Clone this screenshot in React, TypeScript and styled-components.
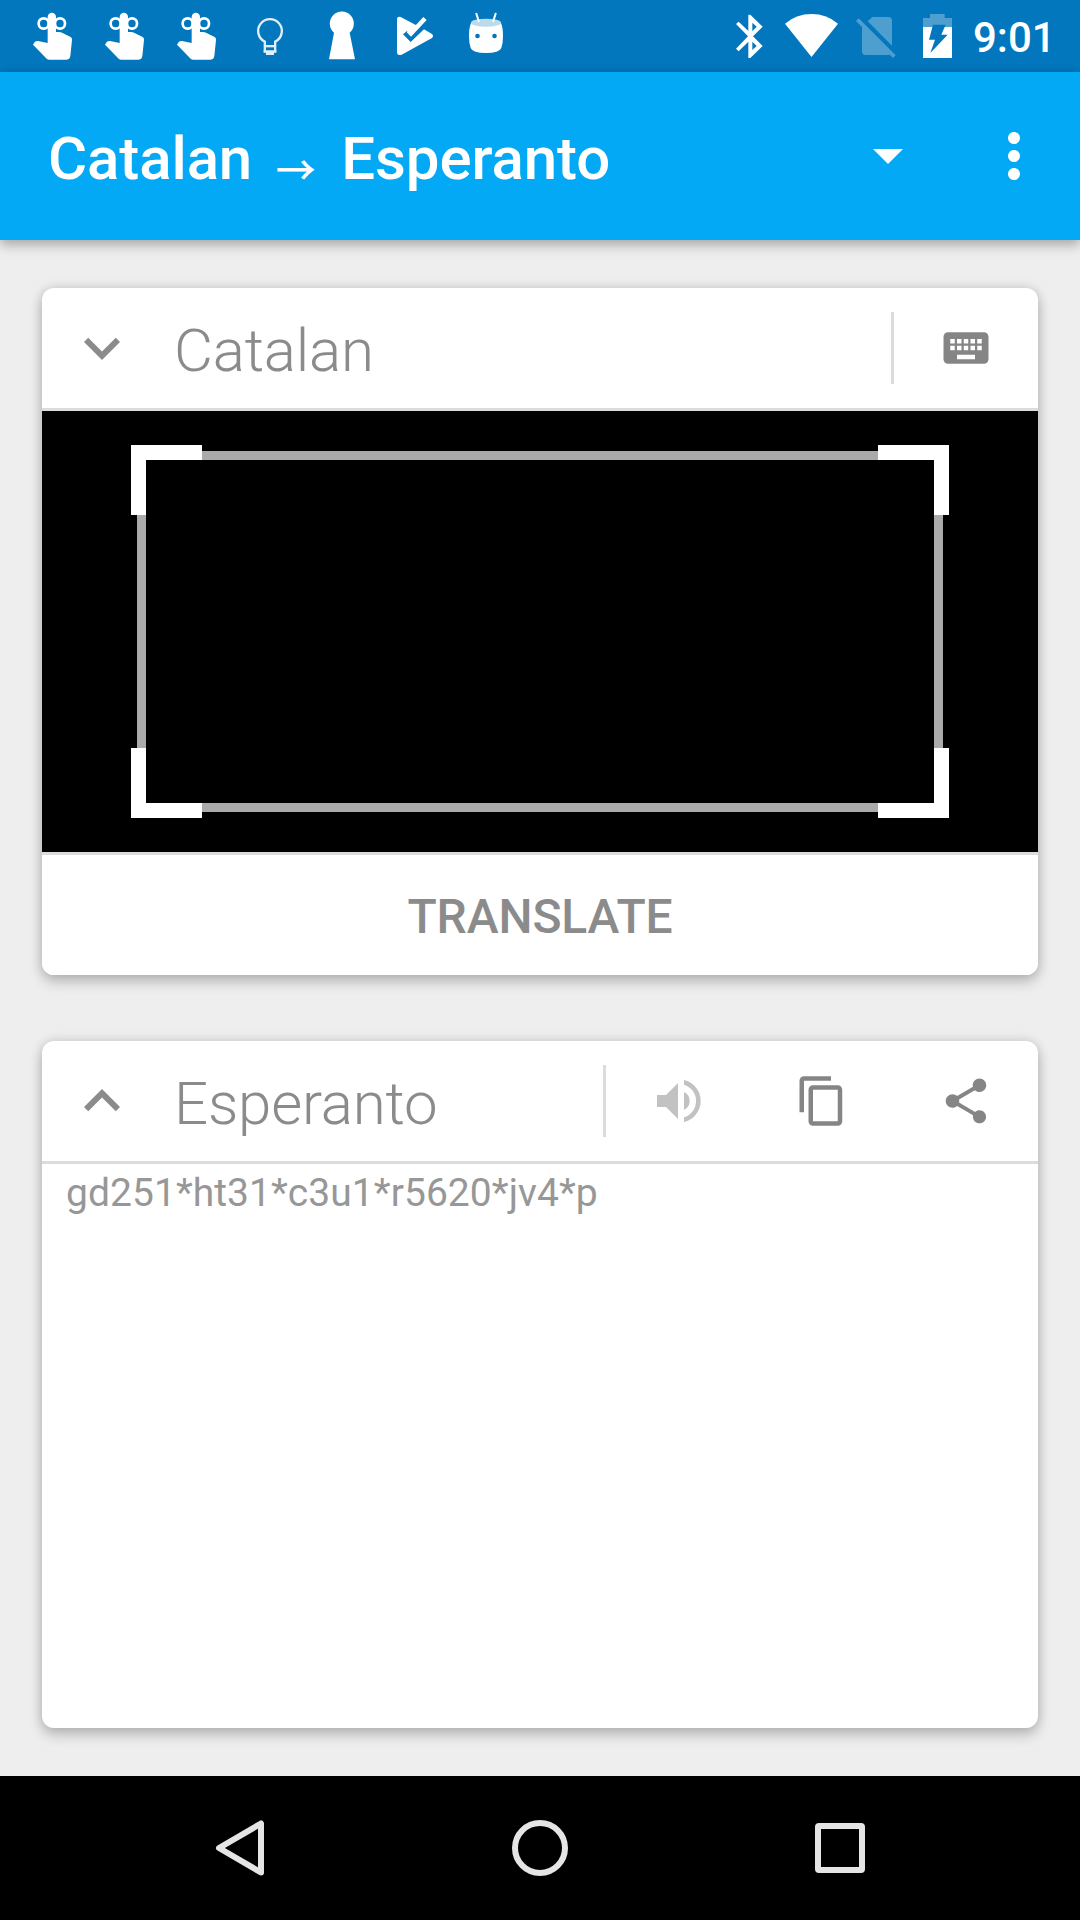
import React from "react";
import styled, { createGlobalStyle } from "styled-components";

const GlobalStyle = createGlobalStyle`
  * { box-sizing: border-box; }
  html, body { margin: 0; padding: 0; }
  body { background: #eee; font-family: Roboto, "Noto Sans", sans-serif; }
  svg { display: block; flex: none; }
`;

const Screen = styled.div`
  width: 1080px;
  height: 1920px;
  display: flex;
  flex-direction: column;
  background: #eee;
  overflow: hidden;
`;

const StatusBar = styled.header`
  height: 72px;
  flex: none;
  display: flex;
  justify-content: space-between;
  background: #0277bd;
  color: #fff;
`;

const Notifications = styled.div`
  display: flex;
  padding-left: 18px;
`;

const SystemIcons = styled.div`
  display: flex;
  padding-right: 29px;
`;

const Clock = styled.time`
  width: 86px;
  padding-left: 8px;
  font-size: 42px;
  font-weight: 500;
  line-height: 75px;
  white-space: nowrap;
`;

const AppBar = styled.div`
  height: 168px;
  flex: none;
  display: flex;
  align-items: center;
  padding: 0 30px 0 48px;
  background: #03a9f4;
  color: #fff;
  box-shadow: 0 6px 12px rgba(0, 0, 0, 0.2), 0 2px 10px rgba(0, 0, 0, 0.14);
`;

const Title = styled.h1`
  flex: 1;
  display: flex;
  align-items: baseline;
  margin: 0;
  padding-top: 6px;
  font-size: 60px;
  font-weight: 500;
  line-height: 70px;
  letter-spacing: -0.1px;
  white-space: nowrap;
`;

const TitleArrow = styled.span`
  width: 89px;
  text-align: center;
  font-family: "Noto Sans CJK JP", sans-serif;
  font-size: 40px;
  font-weight: 500;
  line-height: 40px;
  transform: translate(-1px, 6px);
`;

const BarButton = styled.button<{ $gap?: number }>`
  width: 72px;
  height: 72px;
  margin: 0 0 0 ${(p) => p.$gap ?? 0}px;
  padding: 0;
  border: 0;
  background: none;
  color: inherit;
`;

const Content = styled.main`
  flex: 1;
  display: flex;
  flex-direction: column;
  gap: 66px;
  padding: 48px 42px;
`;

const Card = styled.section`
  height: 687px;
  flex: none;
  display: flex;
  flex-direction: column;
  border-radius: 12px;
  overflow: hidden;
  background: #fff;
  box-shadow: 0 7px 14px rgba(0, 0, 0, 0.2), 0 0 12px rgba(0, 0, 0, 0.14);
`;

const CardHeader = styled.div`
  height: 123px;
  flex: none;
  display: flex;
  align-items: center;
  padding-left: 24px;
  border-bottom: 3px solid #dcdcdc;
  color: #8b8b8b;
`;

const Language = styled.h2`
  flex: 1;
  margin: 0;
  padding: 6px 0 0 36px;
  font-size: 60px;
  font-weight: 300;
  line-height: 70px;
  letter-spacing: -0.22px;
`;

const Actions = styled.div`
  height: 72px;
  display: flex;
  border-left: 3px solid #dcdcdc;
`;

const Action = styled.button<{ $disabled?: boolean }>`
  width: 144px;
  display: flex;
  align-items: center;
  justify-content: center;
  padding: 0;
  border: 0;
  background: none;
  color: ${(p) => (p.$disabled ? "#c2c2c2" : "#858585")};
`;

const Camera = styled.div`
  height: 441px;
  flex: none;
  padding: 34px 89px;
  background: #000;
`;

const TranslateButton = styled.button`
  flex: 1;
  padding: 4px 0 0;
  border: 0;
  border-top: 3px solid #dcdcdc;
  background: #fff;
  color: #8b8b8b;
  font-family: inherit;
  font-size: 48px;
  font-weight: 500;
  line-height: 56px;
  letter-spacing: -0.1px;
`;

const Output = styled.p`
  margin: 0;
  padding: 5px 24px;
  color: #979797;
  font-size: 39px;
  line-height: 48px;
  letter-spacing: 0.05px;
`;

const NavBar = styled.nav`
  height: 144px;
  flex: none;
  display: flex;
  justify-content: center;
  background: #000;
`;

const NavButton = styled.button`
  width: 300px;
  display: flex;
  align-items: center;
  justify-content: center;
  padding: 0;
  border: 0;
  background: none;
`;

const Reminder = () => (
  <svg width="72" height="72" viewBox="54 0 216 216">
    <g fill="none" stroke="#fff" strokeWidth="8">
      <rect x="116" y="55" width="30" height="31" rx="14.5" />
      <rect x="165" y="55" width="30" height="31" rx="14.5" />
    </g>
    <path
      fill="#fff"
      d="M143 51a12 12 0 0 1 25 0V96H178Q182 96 186 98L212 111Q217 114 216 120L211 169Q209 179 200 179H148Q143 179 140 176L99 134L104 126Q108 122 114 123L143 129Z"
    />
  </svg>
);

const Bulb = () => (
  <svg width="72" height="72" viewBox="-18 0 216 216">
    <g fill="none" stroke="#e1eff7" strokeWidth="7">
      <path d="M74.500 157V125A35.500 35.500 0 1 1 105.500 125V157" />
      <path d="M74 138.500H106" />
    </g>
    <path fill="#e1eff7" d="M78 155H102V165H78ZM71 151H109V158H71Z" />
  </svg>
);

const Keyhole = () => (
  <svg width="72" height="72" viewBox="198 0 216 216">
    <path fill="#fff" d="M282 98A36 36 0 1 1 329 98L345 178H267Z" />
  </svg>
);

const PlayCheck = () => (
  <svg width="72" height="72" viewBox="414 0 216 216">
    <path
      fill="#fff"
      d="M471 56Q472 49 482 51L529 76L513 107L501 93L489 103L512 126L552 88L576 102Q582 108 576 114L485 164Q472 168 471 158Z"
    />
    <path fill="#fff" d="M527 76L550 51L560 60L513 110L500 97Z" />
  </svg>
);

const AndroidHead = () => (
  <svg width="72" height="72" viewBox="630 0 216 216">
    <path
      fill="#fff"
      d="M693 69L783 69Q789 83 789 108Q789 130 784 144Q778 159 738 159Q698 159 692 144Q687 130 687 108Q687 83 693 69Z"
    />
    <ellipse cx="738" cy="68" rx="45" ry="12" fill="#bbdaec" />
    <path stroke="#fff" strokeWidth="6" strokeLinecap="round" d="M709 41L716 63M767 41L760 63" />
    <circle cx="712.500" cy="108" r="7" fill="#0277bd" />
    <circle cx="763.500" cy="108" r="7" fill="#0277bd" />
  </svg>
);

const Bluetooth = () => (
  <svg width="45" height="72" viewBox="60 0 135 216">
    <path
      fill="#fff"
      fillRule="evenodd"
      d="M115 44H121L158 80L129 109L158 138L121 174H115V125L86 154L78 146L114 109L78 72L86 65L115 93ZM127 68V94L140 80ZM127 125V150L140 138Z"
    />
  </svg>
);

const Wifi = () => (
  <svg width="72" height="72" viewBox="195 0 216 216">
    <path fill="#fff" d="M304.500 171L225 71Q258 42 304.500 42Q351 42 384 71Z" />
  </svg>
);

const NoSim = () => (
  <svg width="60" height="72" viewBox="411 0 180 216">
    <g fill="#4e9fd0">
      <path d="M487 51H535Q546 51 546 62V137L473 64Z" />
      <path d="M456 78L540 162Q538 165 535 165H467Q456 165 456 154Z" />
      <path d="M446 55L557 166L549 174L438 63Z" />
    </g>
  </svg>
);

const Battery = () => (
  <svg width="58" height="72" viewBox="591 0 174 216">
    <path fill="#4e9fd0" d="M639 54H660V42H704V54H726V82H639Z" />
    <path fill="#fff" d="M639 81H726V174H639Z" />
    <path fill="#0277bd" d="M669 74H707L694 104H713L661 159L675 119H657Z" />
  </svg>
);

const Speaker = () => (
  <svg width="54" height="54" viewBox="213 162 162 162" fill="currentColor">
    <path d="M231 225V261H258L294 297V189L258 225Z" />
    <path d="M312 216A30 30 0 0 1 312 270Z" />
    <path d="M312 180A64.700 64.700 0 0 1 312 306V292A51.300 51.300 0 0 0 312 194Z" />
  </svg>
);

const MaterialIcon = ({ d, size = 54 }: { d: string; size?: number }) => (
  <svg width={size} height={size} viewBox="0 0 24 24" fill="currentColor">
    <path d={d} />
  </svg>
);

const icons = {
  dropDown: "M7 9.700l5 5 5-5z",
  more: "M12 8c1.100 0 2-.9 2-2s-.9-2-2-2-2 .9-2 2 .9 2 2 2zm0 2c-1.100 0-2 .9-2 2s.9 2 2 2 2-.9 2-2-.9-2-2-2zm0 6c-1.100 0-2 .9-2 2s.9 2 2 2 2-.9 2-2-.9-2-2-2z",
  expandMore: "M16.590 8.590L12 13.170 7.410 8.590 6 10l6 6 6-6z",
  expandLess: "M12 8l-6 6 1.410 1.410L12 10.830l4.590 4.580L18 14z",
  keyboard:
    "M20 5H4c-1.100 0-1.990.9-1.990 2L2 17c0 1.100.9 2 2 2h16c1.100 0 2-.9 2-2V7c0-1.100-.9-2-2-2zm-9 3h2v2h-2V8zm0 3h2v2h-2v-2zM8 8h2v2H8V8zm0 3h2v2H8v-2zm-1 2H5v-2h2v2zm0-3H5V8h2v2zm9 7H8v-2h8v2zm0-4h-2v-2h2v2zm0-3h-2V8h2v2zm3 3h-2v-2h2v2zm0-3h-2V8h2v2z",
  copy: "M16 1H4c-1.100 0-2 .9-2 2v14h2V3h12V1zm3 4H8c-1.100 0-2 .9-2 2v14c0 1.100.9 2 2 2h11c1.100 0 2-.9 2-2V7c0-1.100-.9-2-2-2zm0 16H8V7h11v14z",
  share:
    "M18 16.080c-.76 0-1.440.3-1.960.77L8.910 12.700c.05-.23.09-.46.09-.7s-.04-.47-.09-.7l7.050-4.110c.54.5 1.250.81 2.040.81 1.660 0 3-1.340 3-3s-1.340-3-3-3-3 1.340-3 3c0 .24.04.47.09.7L8.040 9.810C7.500 9.310 6.790 9 6 9c-1.660 0-3 1.340-3 3s1.340 3 3 3c.79 0 1.500-.31 2.040-.81l7.120 4.160c-.05.21-.08.43-.08.65 0 1.610 1.310 2.920 2.920 2.920 1.610 0 2.920-1.310 2.920-2.920s-1.310-2.920-2.920-2.920z",
};

const Viewfinder = () => (
  <svg width="818" height="373" viewBox="0 0 818 373" fill="none" shapeRendering="crispEdges">
    <rect x="10.500" y="10.500" width="797" height="352" stroke="#aaa" strokeWidth="9" />
    <path
      fill="#fff"
      d="M0 0H71V15H15V70H0ZM818 0V70H803V15H747V0ZM0 373V303H15V358H71V373ZM818 373H747V358H803V303H818Z"
    />
  </svg>
);

export default function App() {
  return (
    <Screen>
      <GlobalStyle />
      <StatusBar>
        <Notifications>
          <Reminder />
          <Reminder />
          <Reminder />
          <Bulb />
          <Keyhole />
          <PlayCheck />
          <AndroidHead />
        </Notifications>
        <SystemIcons>
          <Bluetooth />
          <Wifi />
          <NoSim />
          <Battery />
          <Clock>9:01</Clock>
        </SystemIcons>
      </StatusBar>
      <AppBar>
        <Title>
          Catalan<TitleArrow>→</TitleArrow>Esperanto
        </Title>
        <BarButton aria-label="Change languages">
          <MaterialIcon size={72} d={icons.dropDown} />
        </BarButton>
        <BarButton $gap={54} aria-label="More options">
          <MaterialIcon size={72} d={icons.more} />
        </BarButton>
      </AppBar>
      <Content>
        <Card>
          <CardHeader>
            <MaterialIcon size={72} d={icons.expandMore} />
            <Language>Catalan</Language>
            <Actions>
              <Action aria-label="Keyboard">
                <MaterialIcon d={icons.keyboard} />
              </Action>
            </Actions>
          </CardHeader>
          <Camera>
            <Viewfinder />
          </Camera>
          <TranslateButton>TRANSLATE</TranslateButton>
        </Card>
        <Card>
          <CardHeader>
            <MaterialIcon size={72} d={icons.expandLess} />
            <Language>Esperanto</Language>
            <Actions>
              <Action $disabled aria-label="Speak">
                <Speaker />
              </Action>
              <Action aria-label="Copy">
                <MaterialIcon d={icons.copy} />
              </Action>
              <Action aria-label="Share">
                <MaterialIcon d={icons.share} />
              </Action>
            </Actions>
          </CardHeader>
          <Output>gd251*ht31*c3u1*r5620*jv4*p</Output>
        </Card>
      </Content>
      <NavBar>
        <NavButton aria-label="Back">
          <svg width="72" height="72" viewBox="0 0 72 72" fill="none">
            <path d="M57 11.500V60.500L15 36Z" stroke="#e5e5e5" strokeWidth="6" strokeLinejoin="round" />
          </svg>
        </NavButton>
        <NavButton aria-label="Home">
          <svg width="72" height="72" viewBox="0 0 72 72" fill="none">
            <circle cx="36" cy="36" r="25" stroke="#e5e5e5" strokeWidth="6" />
          </svg>
        </NavButton>
        <NavButton aria-label="Recent apps">
          <svg width="72" height="72" viewBox="0 0 72 72" fill="none">
            <rect x="14" y="14" width="44" height="44" rx="1" stroke="#e5e5e5" strokeWidth="6" />
          </svg>
        </NavButton>
      </NavBar>
    </Screen>
  );
}
